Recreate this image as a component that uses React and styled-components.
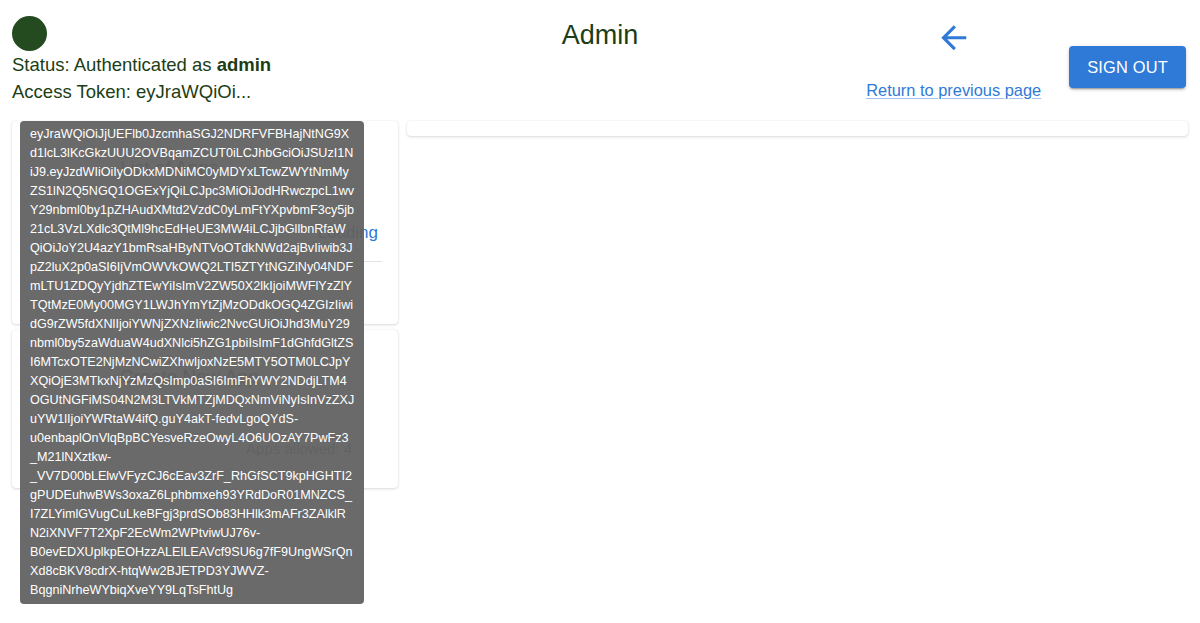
import styled, { createGlobalStyle } from 'styled-components';

const GlobalStyle = createGlobalStyle`
  body {
    margin: 0;
    background: #ffffff;
    font-family: "Liberation Sans", Arial, sans-serif;
  }
`;

const TOKEN_LINES = [
  'eyJraWQiOiJjUEFlb0JzcmhaSGJ2NDRFVFBHajNtNG9X',
  'd1lcL3lKcGkzUUU2OVBqamZCUT0iLCJhbGciOiJSUzI1N',
  'iJ9.eyJzdWIiOiIyODkxMDNiMC0yMDYxLTcwZWYtNmMy',
  'ZS1lN2Q5NGQ1OGExYjQiLCJpc3MiOiJodHRwczpcL1wv',
  'Y29nbml0by1pZHAudXMtd2VzdC0yLmFtYXpvbmF3cy5jb',
  '21cL3VzLXdlc3QtMl9hcEdHeUE3MW4iLCJjbGllbnRfaW',
  'QiOiJoY2U4azY1bmRsaHByNTVoOTdkNWd2ajBvIiwib3J',
  'pZ2luX2p0aSI6IjVmOWVkOWQ2LTI5ZTYtNGZiNy04NDF',
  'mLTU1ZDQyYjdhZTEwYiIsImV2ZW50X2lkIjoiMWFlYzZlY',
  'TQtMzE0My00MGY1LWJhYmYtZjMzODdkOGQ4ZGIzIiwi',
  'dG9rZW5fdXNlIjoiYWNjZXNzIiwic2NvcGUiOiJhd3MuY29',
  'nbml0by5zaWduaW4udXNlci5hZG1pbiIsImF1dGhfdGltZS',
  'I6MTcxOTE2NjMzNCwiZXhwIjoxNzE5MTY5OTM0LCJpY',
  'XQiOjE3MTkxNjYzMzQsImp0aSI6ImFhYWY2NDdjLTM4',
  'OGUtNGFiMS04N2M3LTVkMTZjMDQxNmViNyIsInVzZXJ',
  'uYW1lIjoiYWRtaW4ifQ.guY4akT-fedvLgoQYdS-',
  'u0enbaplOnVlqBpBCYesveRzeOwyL4O6UOzAY7PwFz3',
  '_M21lNXztkw-',
  '_VV7D00bLElwVFyzCJ6cEav3ZrF_RhGfSCT9kpHGHTI2',
  'gPUDEuhwBWs3oxaZ6Lphbmxeh93YRdDoR01MNZCS_',
  'I7ZLYimlGVugCuLkeBFgj3prdSOb83HHlk3mAFr3ZAlklR',
  'N2iXNVF7T2XpF2EcWm2WPtviwUJ76v-',
  'B0evEDXUplkpEOHzzALElLEAVcf9SU6g7fF9UngWSrQn',
  'Xd8cBKV8cdrX-htqWw2BJETPD3YJWVZ-',
  'BqgniNrheWYbiqXveYY9LqTsFhtUg',
];

const Page = styled.div`
  min-height: 623px;
  padding: 0 12px;
  color: #1c3d15;
`;

const Header = styled.header`
  display: grid;
  grid-template-columns: 1fr auto 1fr;
  align-items: start;
`;

const UserInfo = styled.div`
  display: flex;
  flex-direction: column;
`;

const Avatar = styled.div`
  width: 35px;
  height: 35px;
  margin-top: 16px;
  border-radius: 50%;
  background: #244a1f;
`;

const InfoLine = styled.div`
  position: relative;
  font-size: 18.5px;
  line-height: 27px;
  white-space: nowrap;
`;

const Title = styled.h1`
  margin: 20px 0 0;
  font-size: 27px;
  font-weight: 400;
  line-height: 31px;
  color: #1c3d15;
`;

const Actions = styled.div`
  display: flex;
  justify-content: flex-end;
  align-items: flex-start;
  gap: 28px;
  padding-right: 2px;
`;

const BackGroup = styled.div`
  display: flex;
  flex-direction: column;
  align-items: center;
  gap: 24px;
  margin-top: 19px;
`;

const BackIcon = styled.svg`
  display: block;
  width: 37.5px;
  height: 37.5px;
  fill: #2f7ad6;
`;

const BackLink = styled.a`
  font-size: 16.4px;
  line-height: 19px;
  color: #2f7ad6;
  text-decoration: underline;
  text-decoration-color: rgba(47, 122, 214, 0.45);
  text-underline-offset: 2px;
  cursor: pointer;
`;

const SignOutButton = styled.button`
  margin-top: 46px;
  height: 42px;
  padding: 0 18px;
  border: none;
  border-radius: 4px;
  background: #2f7ad6;
  color: #ffffff;
  font-family: "Liberation Sans", Arial, sans-serif;
  font-size: 16.4px;
  letter-spacing: 0.2px;
  text-transform: uppercase;
  box-shadow: 0 3px 1px -2px rgba(0, 0, 0, 0.2), 0 2px 2px 0 rgba(0, 0, 0, 0.14),
    0 1px 5px 0 rgba(0, 0, 0, 0.12);
  cursor: pointer;
`;

const Tooltip = styled.div`
  position: absolute;
  top: calc(100% + 16px);
  left: 8px;
  z-index: 10;
  padding: 4px 10px;
  border-radius: 4px;
  background: rgba(97, 97, 97, 0.94);
  color: #ffffff;
  font-size: 12.6px;
  line-height: 19px;
`;

const TokenRow = styled.div`
  white-space: nowrap;
`;

const Content = styled.main`
  display: grid;
  grid-template-columns: 386px 1fr;
  gap: 9px;
  margin-top: 16px;
  align-items: start;
`;

const Column = styled.div`
  display: flex;
  flex-direction: column;
  gap: 6px;
`;

const Card = styled.section`
  height: ${(props) => props.height}px;
  box-sizing: border-box;
  padding: ${(props) => (props.$empty ? 0 : '16px')};
  border-radius: 4px;
  background: #ffffff;
  box-shadow: 0 1px 3px rgba(0, 0, 0, 0.14), 0 0 1px rgba(0, 0, 0, 0.12);
  color: #333333;
`;

const CardTitle = styled.h2`
  margin: 20px 0 0 92px;
  font-size: 19px;
  font-weight: 400;
  color: #555555;
`;

const CardLinkRow = styled.div`
  display: flex;
  justify-content: flex-end;
  margin-top: 44px;
  padding-right: 4px;
`;

const CardLink = styled.a`
  font-size: 17px;
  color: #2f7ad6;
`;

const Divider = styled.hr`
  margin: 18px 0 0;
  border: none;
  border-top: 1px solid #e4e4e4;
`;

const CardNote = styled.p`
  margin: 52px 30px 0 0;
  text-align: right;
  font-size: 15px;
  color: #777777;
`;

function App() {
  return (
    <Page>
      <GlobalStyle />
      <Header>
        <UserInfo>
          <Avatar />
          <InfoLine>
            Status: Authenticated as <b>admin</b>
          </InfoLine>
          <InfoLine>
            Access Token: eyJraWQiOi...
            <Tooltip role="tooltip">
              {TOKEN_LINES.map((line) => (
                <TokenRow key={line}>{line}</TokenRow>
              ))}
            </Tooltip>
          </InfoLine>
        </UserInfo>
        <Title>Admin</Title>
        <Actions>
          <BackGroup>
            <BackIcon viewBox="0 0 24 24" aria-hidden="true">
              <path d="M20 11H7.83l5.59-5.59L12 4l-8 8 8 8 1.41-1.41L7.83 13H20v-2z" />
            </BackIcon>
            <BackLink>Return to previous page</BackLink>
          </BackGroup>
          <SignOutButton>Sign out</SignOutButton>
        </Actions>
      </Header>
      <Content>
        <Column>
          <Card height={203}>
            <CardTitle>List of Apps</CardTitle>
            <CardLinkRow>
              <CardLink>Loading</CardLink>
            </CardLinkRow>
            <Divider />
          </Card>
          <Card height={158}>
            <CardTitle>Create New App</CardTitle>
            <CardNote>Apps allowed: 4</CardNote>
          </Card>
        </Column>
        <Card height={15} $empty />
      </Content>
    </Page>
  );
}

export default App;
